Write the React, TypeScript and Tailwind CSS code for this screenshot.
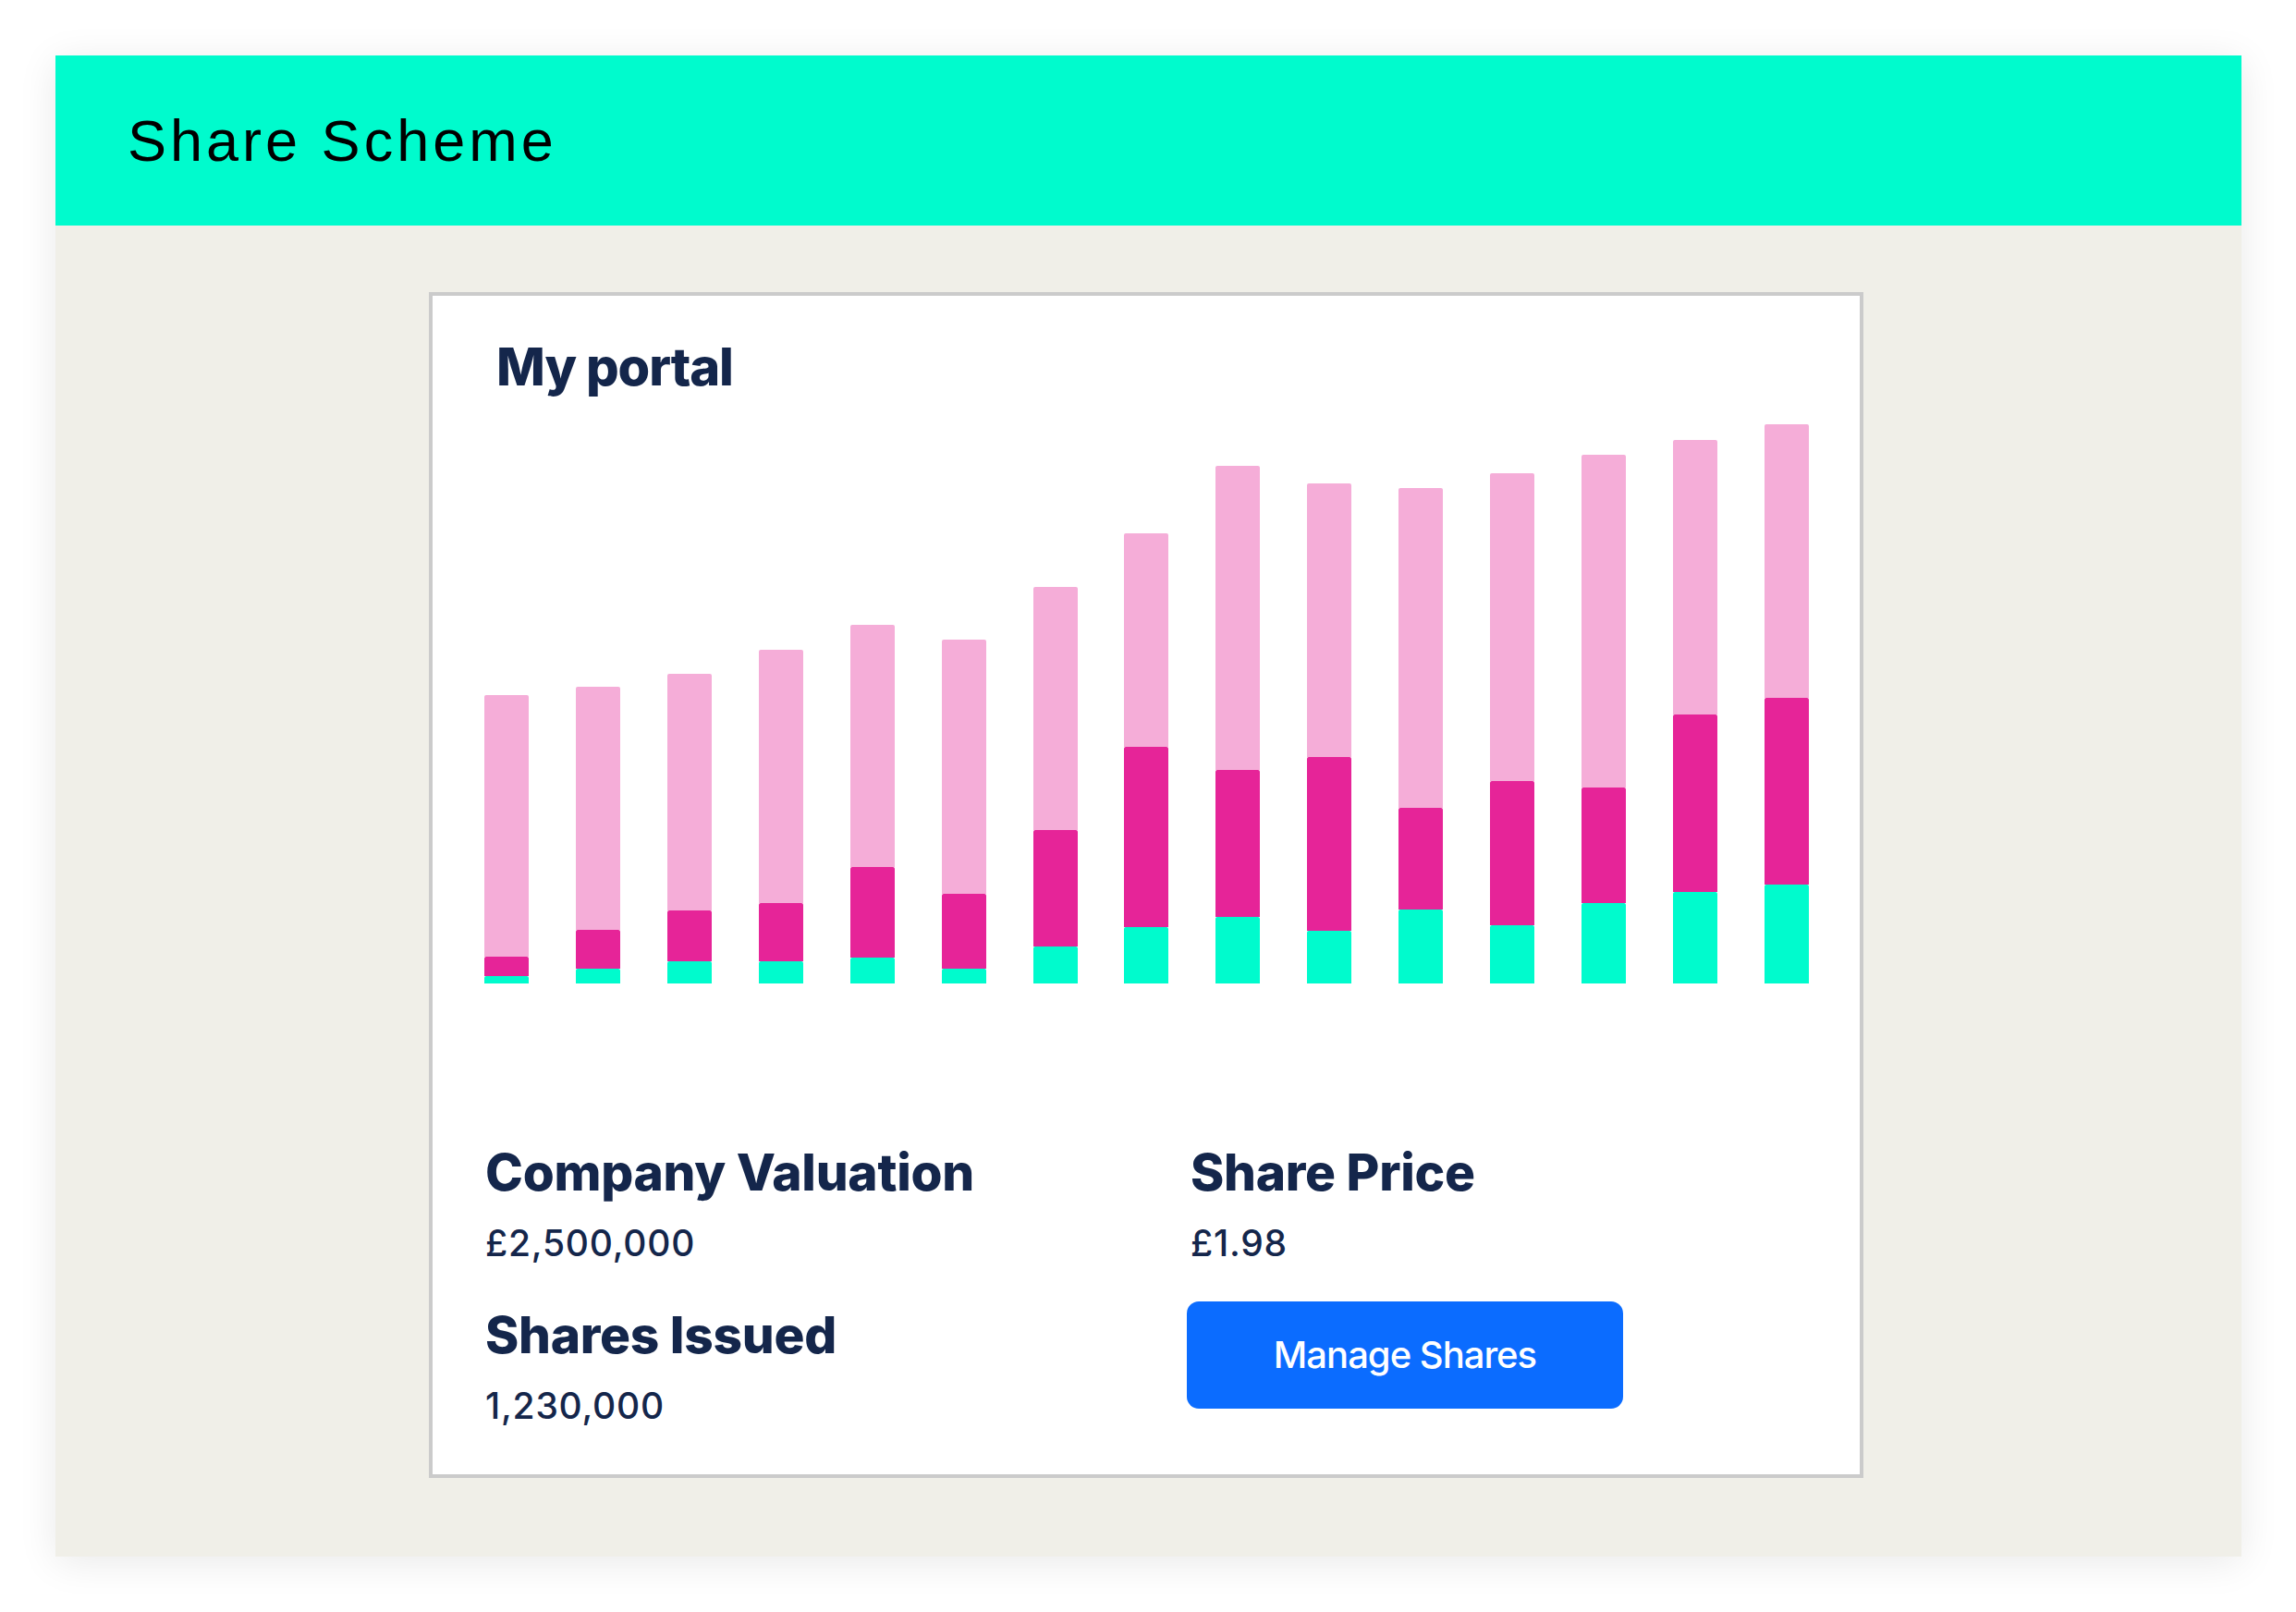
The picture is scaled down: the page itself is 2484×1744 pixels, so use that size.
const bars = [
  { pink: 283, mag: 21, cyan: 8 },
  { pink: 263, mag: 42, cyan: 16 },
  { pink: 256, mag: 55, cyan: 24 },
  { pink: 274, mag: 63, cyan: 24 },
  { pink: 262, mag: 98, cyan: 28 },
  { pink: 275, mag: 81, cyan: 16 },
  { pink: 263, mag: 126, cyan: 40 },
  { pink: 231, mag: 195, cyan: 61 },
  { pink: 329, mag: 159, cyan: 72 },
  { pink: 296, mag: 188, cyan: 57 },
  { pink: 346, mag: 110, cyan: 80 },
  { pink: 333, mag: 156, cyan: 63 },
  { pink: 360, mag: 125, cyan: 87 },
  { pink: 297, mag: 192, cyan: 99 },
  { pink: 296, mag: 202, cyan: 107 },
];

function Stat({ label, value }: { label: string; value: string }) {
  return (
    <div className="flex flex-col">
      <h3 className="text-[55px] leading-[66px] font-extrabold tracking-[-0.005em] text-[#14264b]">
        {label}
      </h3>
      <p className="mt-[21px] text-[39px] leading-[46px] font-medium tracking-[0.02em] text-[#14264b]">
        {value}
      </p>
    </div>
  );
}

export default function App() {
  return (
    <div className="min-h-[1744px] w-full bg-white p-[60px] pr-[59px] font-['Inter',sans-serif]">
      <div className="flex h-[1624px] w-full flex-col bg-[#f0efe8] shadow-[0_6px_40px_rgba(0,0,0,0.09)]">
        {/* Header bar */}
        <header className="flex h-[184px] items-center bg-[#00fbcd] pl-[78px]">
          <h1 className="font-['Liberation_Sans',Arial,sans-serif] text-[63px] leading-none tracking-[4px] text-black">
            Share Scheme
          </h1>
        </header>

        {/* Portal card */}
        <div className="ml-[404px] mt-[72px] w-[1552px] border-4 border-[#cbcbcb] bg-white pl-[53px] pr-[55px] pt-[43px] pb-[51px]">
          <h2 className="ml-[16px] text-[56px] leading-[68px] font-extrabold tracking-[-0.02em] text-[#14264b]">
            My portal
          </h2>

          {/* Stacked bar chart */}
          <div className="ml-[3px] flex h-[633px] items-end justify-between">
            {bars.map((b, i) => (
              <div key={i} className="flex w-[48px] flex-col">
                <div className="rounded-t-[2px] bg-[#f5add8]" style={{ height: b.pink }} />
                <div className="rounded-t-[2px] bg-[#e62498]" style={{ height: b.mag }} />
                <div className="rounded-t-[2px] bg-[#00fbcd]" style={{ height: b.cyan }} />
              </div>
            ))}
          </div>

          {/* Figures */}
          <div className="mt-[171px] grid grid-cols-[763px_1fr] pl-[4px]">
            <div className="flex flex-col gap-[43px]">
              <Stat label="Company Valuation" value="£2,500,000" />
              <Stat label="Shares Issued" value="1,230,000" />
            </div>
            <div className="flex flex-col items-start">
              <Stat label="Share Price" value="£1.98" />
              <button className="mt-[40px] ml-[-4px] h-[116px] w-[472px] rounded-[13px] bg-[#0b6cff] text-[40px] font-medium tracking-[-0.025em] text-white">
                Manage Shares
              </button>
            </div>
          </div>
        </div>
      </div>
    </div>
  );
}
